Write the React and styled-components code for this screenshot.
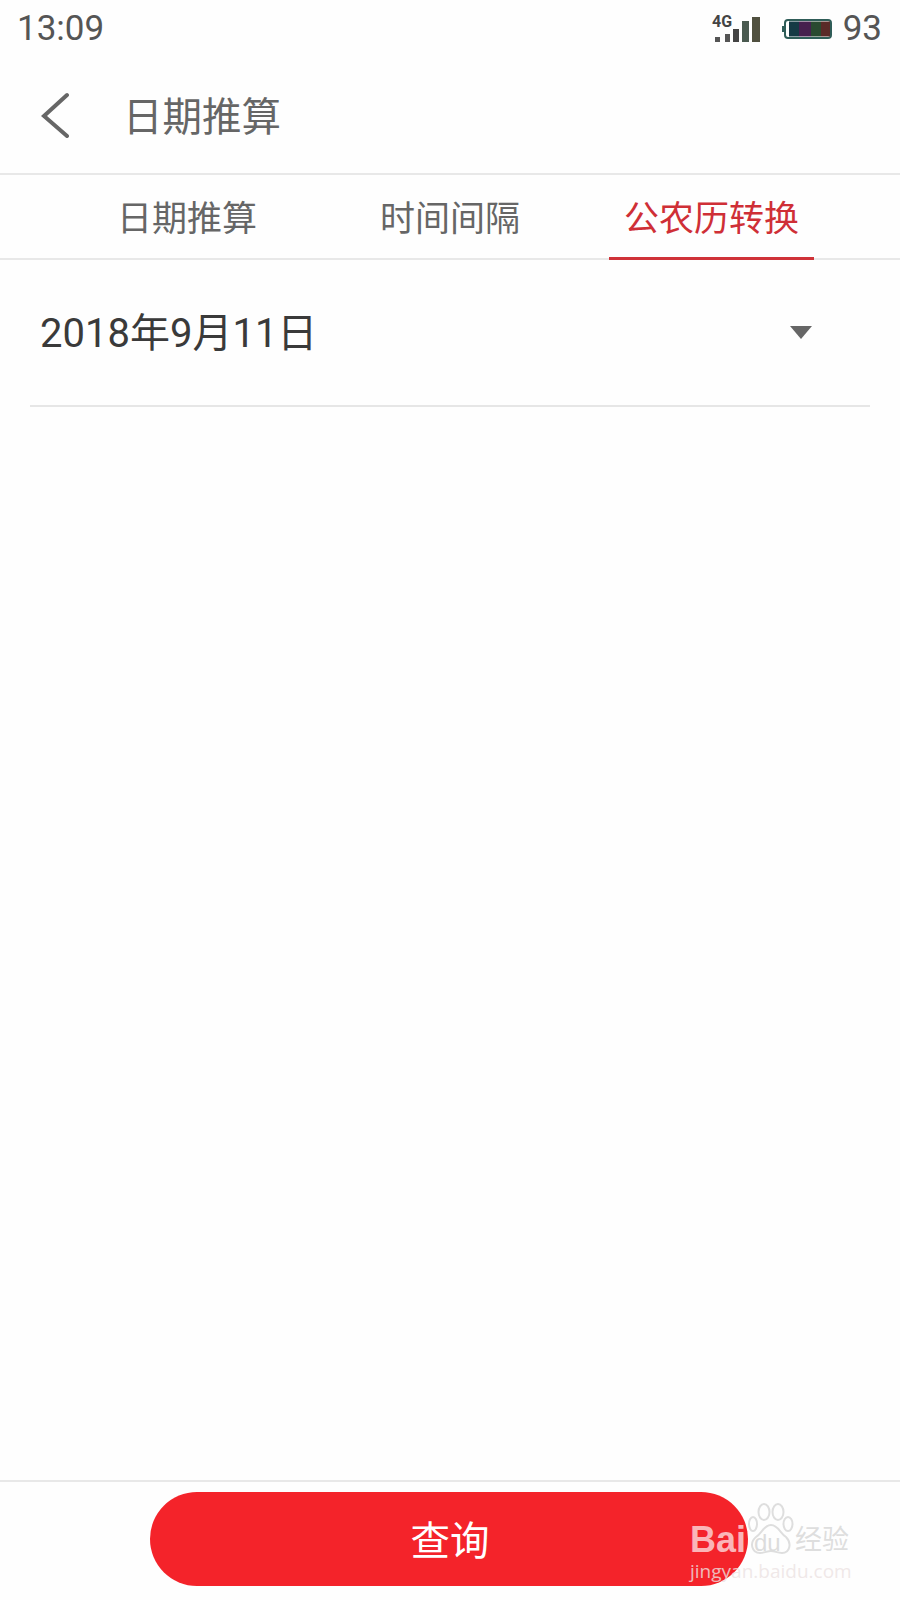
import React from "react";
import styled, { createGlobalStyle } from "styled-components";

const GlobalStyle = createGlobalStyle`
  html, body {
    margin: 0;
    padding: 0;
    background: #fff;
  }
  body {
    font-family: Roboto, "Noto Sans CJK SC", sans-serif;
  }
`;

const Page = styled.div`
  position: relative;
  display: flex;
  flex-direction: column;
  width: 900px;
  height: 1600px;
  overflow: hidden;
  background: #fefefe;
`;

const StatusBar = styled.div`
  display: flex;
  align-items: center;
  justify-content: space-between;
  box-sizing: border-box;
  height: 56px;
  padding: 2px 18px 0 17px;
  color: #555;
  font-size: 35px;
  line-height: 54px;
`;

const StatusRight = styled.div`
  display: flex;
  align-items: center;
`;

const SignalIcon = styled.svg`
  width: 62px;
  height: 34px;
  margin-right: 20px;
`;

const BatteryIcon = styled.svg`
  width: 50px;
  height: 22px;
  margin-right: 11px;
`;

const Header = styled.div`
  display: flex;
  align-items: center;
  height: 117px;
  padding-left: 41px;
  border-bottom: 2px solid #e8e8e8;
  box-sizing: content-box;
`;

const BackIcon = styled.svg`
  width: 30px;
  height: 46px;
  margin-right: 52px;
`;

const Title = styled.div`
  color: #666;
  font-size: 39.5px;
  line-height: 1;
  margin-top: 6px;
`;

const Tabs = styled.div`
  display: flex;
  align-items: stretch;
  height: 83px;
  border-bottom: 2px solid #e8e8e8;
`;

const Tab = styled.div`
  display: flex;
  align-items: center;
  justify-content: center;
  box-sizing: border-box;
  width: ${(p) => p.$width}px;
  margin-left: ${(p) => p.$left}px;
  margin-bottom: -2px;
  padding-bottom: 2px;
  color: ${(p) => (p.$active ? "#cf2f36" : "#666")};
  font-size: 35px;
  border-bottom: 3px solid ${(p) => (p.$active ? "#cf3238" : "transparent")};
`;

const DateRow = styled.div`
  display: flex;
  align-items: center;
  justify-content: space-between;
  height: 145px;
  margin: 0 30px;
  padding: 0 58px 0 10px;
  border-bottom: 2px solid #e6e6e6;
`;

const DateText = styled.div`
  color: #3a3a3a;
  font-size: 40px;
  line-height: 1;
  margin-top: 2px;
`;

const Caret = styled.div`
  width: 0;
  height: 0;
  border-left: 11px solid transparent;
  border-right: 11px solid transparent;
  border-top: 13px solid #666;
`;

const Spacer = styled.div`
  flex: 1;
`;

const Footer = styled.div`
  display: flex;
  align-items: flex-start;
  height: 108px;
  padding: 10px 0 0 150px;
  border-top: 2px solid #e8e8e8;
`;

const QueryButton = styled.button`
  width: 598px;
  height: 94px;
  border: 0;
  border-radius: 47px;
  background: #f4232a;
  color: #fff;
  font-family: inherit;
  font-size: 39.5px;
  line-height: 1;
  padding: 5px 0 0 2px;
`;

// Baidu watermark sitting over the corner of the button
const Watermark = styled.div`
  position: absolute;
  left: 690px;
  top: 1500px;
  width: 165px;
  height: 84px;
  pointer-events: none;
`;

const WmBai = styled.span`
  position: absolute;
  left: 0;
  top: 20px;
  color: rgba(252, 222, 224, 0.78);
  font: bold 36px/40px "Liberation Sans", sans-serif;
`;

const WmPaw = styled.svg`
  position: absolute;
  left: 57px;
  top: 3px;
  width: 47px;
  height: 53px;
`;

const WmDu = styled.span`
  position: absolute;
  left: 64px;
  top: 30px;
  color: #dcdcdc;
  font: 24px/26px "Liberation Sans", sans-serif;
`;

const WmCn = styled.span`
  position: absolute;
  left: 105px;
  top: 24px;
  color: #dedede;
  font-size: 27px;
  line-height: 32px;
  white-space: nowrap;
`;

const WmUrl = styled.span`
  position: absolute;
  left: 0;
  top: 59px;
  color: rgba(236, 226, 226, 0.8);
  font: 19px/24px "Open Sans", sans-serif;
  white-space: nowrap;
`;

export default function App() {
  return (
    <Page>
      <GlobalStyle />
      <StatusBar>
        <span>13:09</span>
        <StatusRight>
          <SignalIcon viewBox="0 0 62 34">
            <text x="12" y="15" fontSize="16" fontWeight="700" fontFamily="Roboto, sans-serif" fill="#444">4G</text>
            <rect x="15" y="25" width="5" height="5" fill="#555" />
            <rect x="25" y="22" width="5" height="8" fill="#555" />
            <rect x="33" y="17" width="6" height="13" fill="#444" />
            <rect x="42" y="9" width="7" height="21" fill="#4a5a50" />
            <rect x="52" y="5" width="8" height="25" fill="#50503f" />
          </SignalIcon>
          <BatteryIcon viewBox="0 0 50 22">
            <rect x="0" y="8" width="2" height="6" fill="#2f5d58" />
            <rect x="3" y="2" width="46" height="18" rx="3" fill="#fff" stroke="#2f5d58" strokeWidth="2" />
            <rect x="7" y="3.5" width="10" height="15" fill="#153a44" />
            <rect x="17" y="3.5" width="12" height="15" fill="#46204e" />
            <rect x="29" y="3.5" width="10" height="15" fill="#2a4a30" />
            <rect x="39" y="3.5" width="9" height="15" fill="#5a2a28" />
          </BatteryIcon>
          <span>93</span>
        </StatusRight>
      </StatusBar>

      <Header>
        <BackIcon viewBox="0 0 30 46" fill="none" stroke="#666" strokeWidth="4" strokeLinecap="round" strokeLinejoin="miter">
          <path d="M26 3 L3 24 L26 44" />
        </BackIcon>
        <Title>日期推算</Title>
      </Header>

      <Tabs>
        <Tab $left={85} $width={204}>日期推算</Tab>
        <Tab $left={59} $width={204}>时间间隔</Tab>
        <Tab $left={57} $width={205} $active>公农历转换</Tab>
      </Tabs>

      <DateRow>
        <DateText>2018年9月11日</DateText>
        <Caret />
      </DateRow>

      <Spacer />

      <Footer>
        <QueryButton>查询</QueryButton>
      </Footer>

      <Watermark>
        <WmBai>Bai</WmBai>
        <WmPaw viewBox="0 0 47 53" fill="none" stroke="#dedede" strokeWidth="2">
          <ellipse cx="6" cy="21" rx="4" ry="7" />
          <ellipse cx="17" cy="9" rx="5.5" ry="8" />
          <ellipse cx="31" cy="9" rx="5.5" ry="8" />
          <ellipse cx="41" cy="21" rx="4.5" ry="7" />
          <path d="M24 22 C17 22 15 30 9 34 C2 40 5 50 13 50 C18 50 20 48 24 48 C28 48 30 50 35 50 C43 50 45 40 39 34 C33 30 31 22 24 22 Z" />
        </WmPaw>
        <WmDu>du</WmDu>
        <WmCn>经验</WmCn>
        <WmUrl>jingyan.baidu.com</WmUrl>
      </Watermark>
    </Page>
  );
}
